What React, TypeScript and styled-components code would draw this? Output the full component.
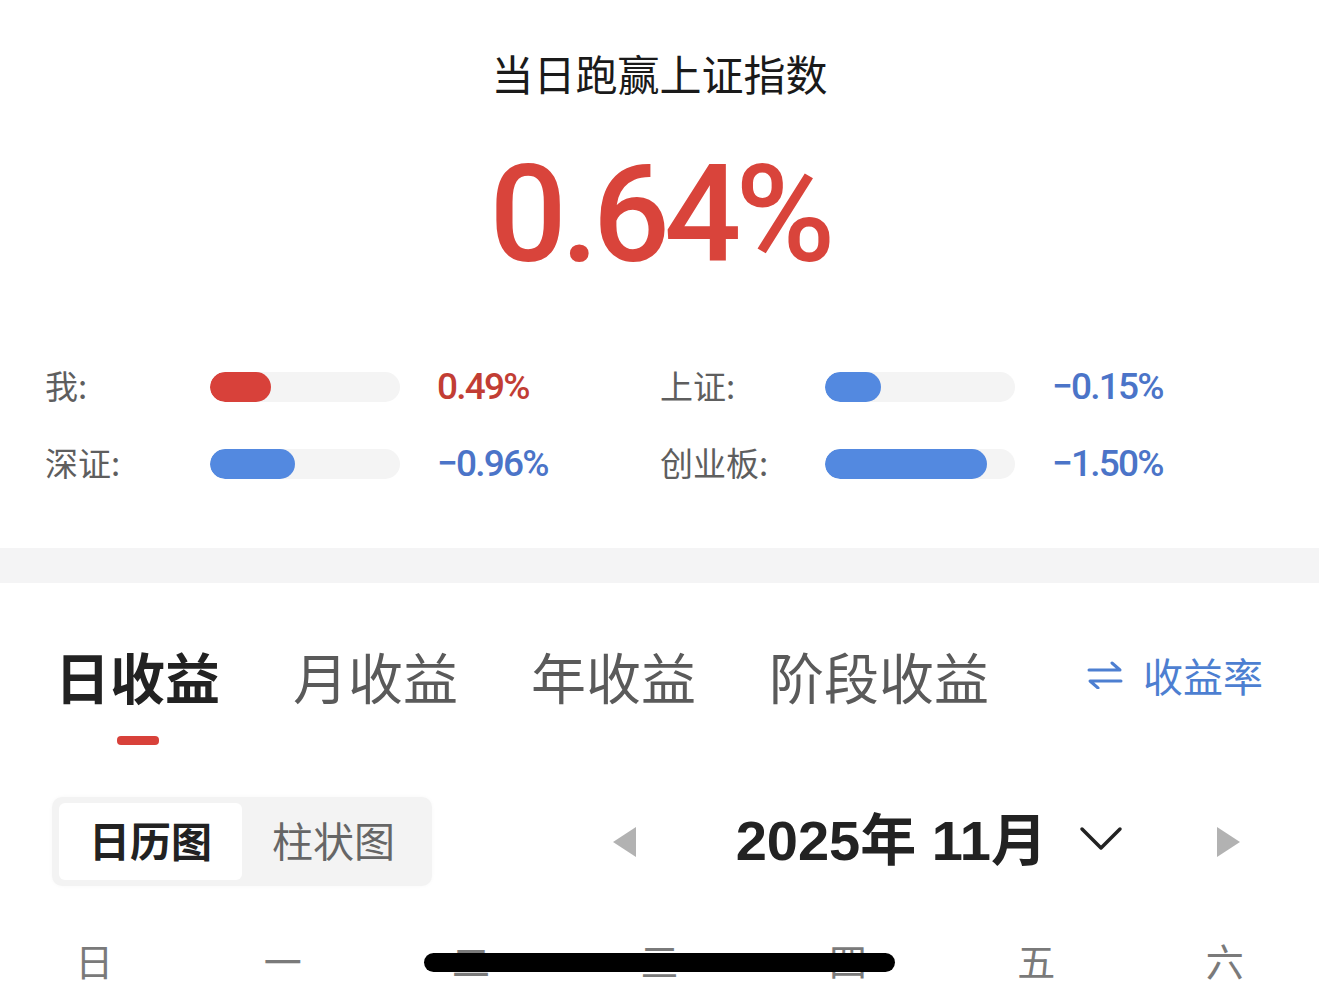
import styled, { createGlobalStyle } from "styled-components";

const GlobalStyle = createGlobalStyle`
  body {
    margin: 0;
    background: #fff;
    font-family: "Noto Sans CJK SC", "Noto Sans", sans-serif;
  }
`;

type Tone = "up" | "down";

interface Stat {
  label: string;
  value: string;
  fill: number;
  tone: Tone;
}

const stats: Stat[] = [
  { label: "我:", value: "0.49%", fill: 32, tone: "up" },
  { label: "上证:", value: "−0.15%", fill: 29.5, tone: "down" },
  { label: "深证:", value: "−0.96%", fill: 44.7, tone: "down" },
  { label: "创业板:", value: "−1.50%", fill: 85.3, tone: "down" },
];

const tabs = ["日收益", "月收益", "年收益", "阶段收益"];
const weekdays = ["日", "一", "二", "三", "四", "五", "六"];

const SwapIcon = () => (
  <svg width="36" height="28" viewBox="0 0 36 28" fill="none">
    <path
      d="M2 9H33L25 2"
      stroke="#4d7fd1"
      strokeWidth="3"
      strokeLinecap="round"
      strokeLinejoin="round"
    />
    <path
      d="M34 20H3L11 27"
      stroke="#4d7fd1"
      strokeWidth="3"
      strokeLinecap="round"
      strokeLinejoin="round"
    />
  </svg>
);

const ChevronDown = () => (
  <svg width="44" height="26" viewBox="0 0 44 26" fill="none">
    <polyline
      points="3,3 22,22 41,3"
      stroke="#222"
      strokeWidth="3.5"
      strokeLinecap="round"
      strokeLinejoin="round"
    />
  </svg>
);

export default function App() {
  return (
    <Page>
      <GlobalStyle />

      <Title>当日跑赢上证指数</Title>
      <BigNumber>0.64%</BigNumber>

      <StatsGrid>
        {stats.map((stat) => (
          <StatItem key={stat.label}>
            <StatLabel>{stat.label}</StatLabel>
            <Track>
              <Fill $tone={stat.tone} style={{ width: `${stat.fill}%` }} />
            </Track>
            <StatValue $tone={stat.tone}>{stat.value}</StatValue>
          </StatItem>
        ))}
      </StatsGrid>

      <Divider />

      <TabBar>
        {tabs.map((tab, index) => (
          <Tab key={tab}>
            <TabText $active={index === 0}>{tab}</TabText>
            <Underline $visible={index === 0} />
          </Tab>
        ))}
        <SwitchLink>
          <SwapIcon />
          <span>收益率</span>
        </SwitchLink>
      </TabBar>

      <ControlRow>
        <Segmented>
          <Segment $active>日历图</Segment>
          <Segment>柱状图</Segment>
        </Segmented>

        <MonthNav>
          <Arrow $dir="left" />
          <MonthTitle>2025年 11月</MonthTitle>
          <ChevronWrap>
            <ChevronDown />
          </ChevronWrap>
          <Arrow $dir="right" />
        </MonthNav>
      </ControlRow>

      <Weekdays>
        {weekdays.map((day) => (
          <Weekday key={day}>{day}</Weekday>
        ))}
      </Weekdays>

      <HomeIndicator />
    </Page>
  );
}

const Page = styled.div`
  position: relative;
  height: 992px;
  overflow: hidden;
  background: #fff;
`;

const Title = styled.h1`
  margin: 0;
  padding-top: 47px;
  font-size: 42px;
  line-height: 52px;
  font-weight: 400;
  color: #1a1a1a;
  text-align: center;
`;

const BigNumber = styled.div`
  margin-top: 48px;
  font-family: Roboto, "Liberation Sans", sans-serif;
  font-size: 136px;
  font-weight: 500;
  line-height: 135px;
  letter-spacing: -6px;
  color: #d9443b;
  text-align: center;
`;

const StatsGrid = styled.div`
  margin-top: 66px;
  padding-left: 45px;
  display: grid;
  grid-template-columns: 615px 615px;
  grid-auto-rows: 77px;
`;

const StatItem = styled.div`
  display: grid;
  grid-template-columns: 165px 190px auto;
  align-items: center;
`;

const StatLabel = styled.span`
  font-size: 33px;
  color: #5e5e5e;
  transform: translateY(-2px);
`;

const Track = styled.div`
  height: 30px;
  border-radius: 15px;
  background: #f4f4f4;
  overflow: hidden;
`;

const Fill = styled.div<{ $tone: Tone }>`
  height: 100%;
  border-radius: 15px;
  background: ${(p) => (p.$tone === "up" ? "#d8413a" : "#5389e0")};
`;

const StatValue = styled.span<{ $tone: Tone }>`
  margin-left: 37px;
  font-family: Roboto, "Liberation Sans", sans-serif;
  font-size: 37px;
  font-weight: 500;
  letter-spacing: -1.8px;
  color: ${(p) => (p.$tone === "up" ? "#c23d34" : "#4b74c8")};
`;

const Divider = styled.div`
  margin-top: 46px;
  height: 35px;
  background: #f4f4f5;
`;

const TabBar = styled.div`
  display: flex;
  align-items: flex-start;
  padding: 60px 56px 0 55px;
`;

const Tab = styled.div`
  display: flex;
  flex-direction: column;
  align-items: center;
  margin-right: 73px;
`;

const TabText = styled.span<{ $active?: boolean }>`
  font-size: 55px;
  line-height: 64px;
  font-weight: ${(p) => (p.$active ? 700 : 400)};
  color: ${(p) => (p.$active ? "#222" : "#5a5a5a")};
`;

const Underline = styled.div<{ $visible?: boolean }>`
  margin-top: 29px;
  width: 42px;
  height: 9px;
  border-radius: 4px;
  background: ${(p) => (p.$visible ? "#d8413a" : "transparent")};
`;

const SwitchLink = styled.div`
  margin-left: auto;
  height: 64px;
  display: flex;
  align-items: center;
  gap: 20px;
  font-size: 40px;
  color: #4d7fd1;
`;

const ControlRow = styled.div`
  margin-top: 52px;
  padding: 0 79px 0 52px;
  display: flex;
  align-items: center;
  justify-content: space-between;
`;

const Segmented = styled.div`
  display: flex;
  padding: 6px 7px;
  border-radius: 10px;
  background: #f3f3f3;
  box-shadow: 0 0 4px rgba(0, 0, 0, 0.03);
`;

const Segment = styled.div<{ $active?: boolean }>`
  width: 183px;
  height: 77px;
  display: flex;
  align-items: center;
  justify-content: center;
  padding-bottom: 6px;
  box-sizing: border-box;
  border-radius: 6px;
  font-size: 41px;
  font-weight: ${(p) => (p.$active ? 700 : 400)};
  color: ${(p) => (p.$active ? "#222" : "#666")};
  background: ${(p) => (p.$active ? "#fff" : "transparent")};
`;

const MonthNav = styled.div`
  display: flex;
  align-items: center;
`;

const Arrow = styled.div<{ $dir: "left" | "right" }>`
  width: 0;
  height: 0;
  border-top: 15px solid transparent;
  border-bottom: 15px solid transparent;
  ${(p) =>
    p.$dir === "left"
      ? "border-right: 23px solid #b2b2b2; margin-right: 100px;"
      : "border-left: 23px solid #b2b2b2; margin-left: 94px;"}
`;

const MonthTitle = styled.span`
  font-family: "Liberation Sans", "Noto Sans CJK SC", sans-serif;
  font-size: 56px;
  line-height: 64px;
  font-weight: 700;
  color: #222;
  transform: translateY(-1px);
`;

const ChevronWrap = styled.span`
  display: flex;
  margin-left: 32px;
  margin-top: -6px;
`;

const Weekdays = styled.div`
  margin-top: 50px;
  display: grid;
  grid-template-columns: repeat(7, 1fr);
`;

const Weekday = styled.span`
  font-size: 38px;
  line-height: 48px;
  color: #7a7a7a;
  text-align: center;
`;

const HomeIndicator = styled.div`
  position: absolute;
  left: 424px;
  top: 953px;
  width: 471px;
  height: 19px;
  border-radius: 10px;
  background: #000;
`;
